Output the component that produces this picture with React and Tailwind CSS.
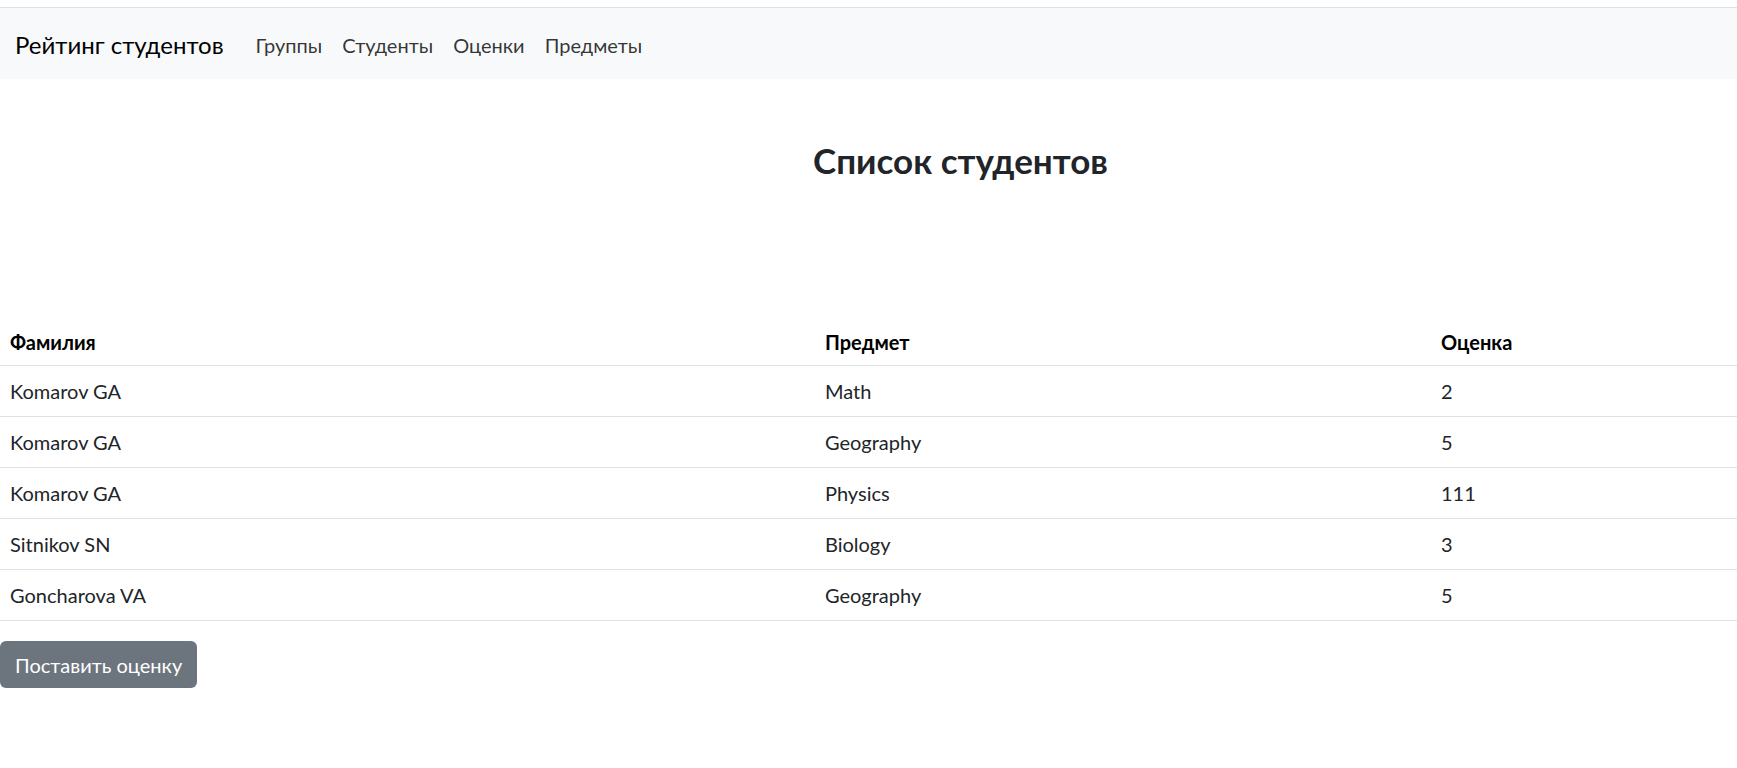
import React from 'react';

const rows = [
  { name: 'Komarov GA', subject: 'Math', grade: '2' },
  { name: 'Komarov GA', subject: 'Geography', grade: '5' },
  { name: 'Komarov GA', subject: 'Physics', grade: '111' },
  { name: 'Sitnikov SN', subject: 'Biology', grade: '3' },
  { name: 'Goncharova VA', subject: 'Geography', grade: '5' },
];

const links = ['Группы', 'Студенты', 'Оценки', 'Предметы'];

export default function App() {
  return (
    <div className="min-h-screen bg-white text-[#212529] text-[20px] leading-[30px] font-['Lato','Noto_Sans',sans-serif]">
      <div className="h-[8px] border-b border-[#dee2e6]" />
      <nav className="h-[71px] pt-[3px] bg-[#f8f9fa] flex items-center px-[15px]">
        <span className="text-[24px] text-black mr-[32px]">Рейтинг студентов</span>
        <div className="flex gap-[20px]">
          {links.map((l) => (
            <a key={l} className="text-[20px] text-black/80">{l}</a>
          ))}
        </div>
      </nav>

      <h2 className="pl-[184px] pt-[57px] h-[236px] text-center text-[35px] leading-[48px] font-bold">
        Список студентов
      </h2>

      <table className="w-full border-collapse mb-[20px]">
        <thead>
          <tr className="border-b border-[#dee2e6]">
            <th className="w-[815px] text-left font-bold text-black px-[10px] pt-[12px] pb-[8px]">Фамилия</th>
            <th className="w-[616px] text-left font-bold text-black px-[10px] pt-[12px] pb-[8px]">Предмет</th>
            <th className="text-left font-bold text-black px-[10px] pt-[12px] pb-[8px]">Оценка</th>
          </tr>
        </thead>
        <tbody>
          {rows.map((r, i) => (
            <tr key={i} className="border-b border-[#dee2e6]">
              <td className="px-[10px] py-[10px]">{r.name}</td>
              <td className="px-[10px] py-[10px]">{r.subject}</td>
              <td className="px-[10px] py-[10px]">{r.grade}</td>
            </tr>
          ))}
        </tbody>
      </table>

      <button className="h-[47px] px-[15px] rounded-[6px] bg-[#6c757d] text-white text-[20px]">
        Поставить оценку
      </button>
    </div>
  );
}
